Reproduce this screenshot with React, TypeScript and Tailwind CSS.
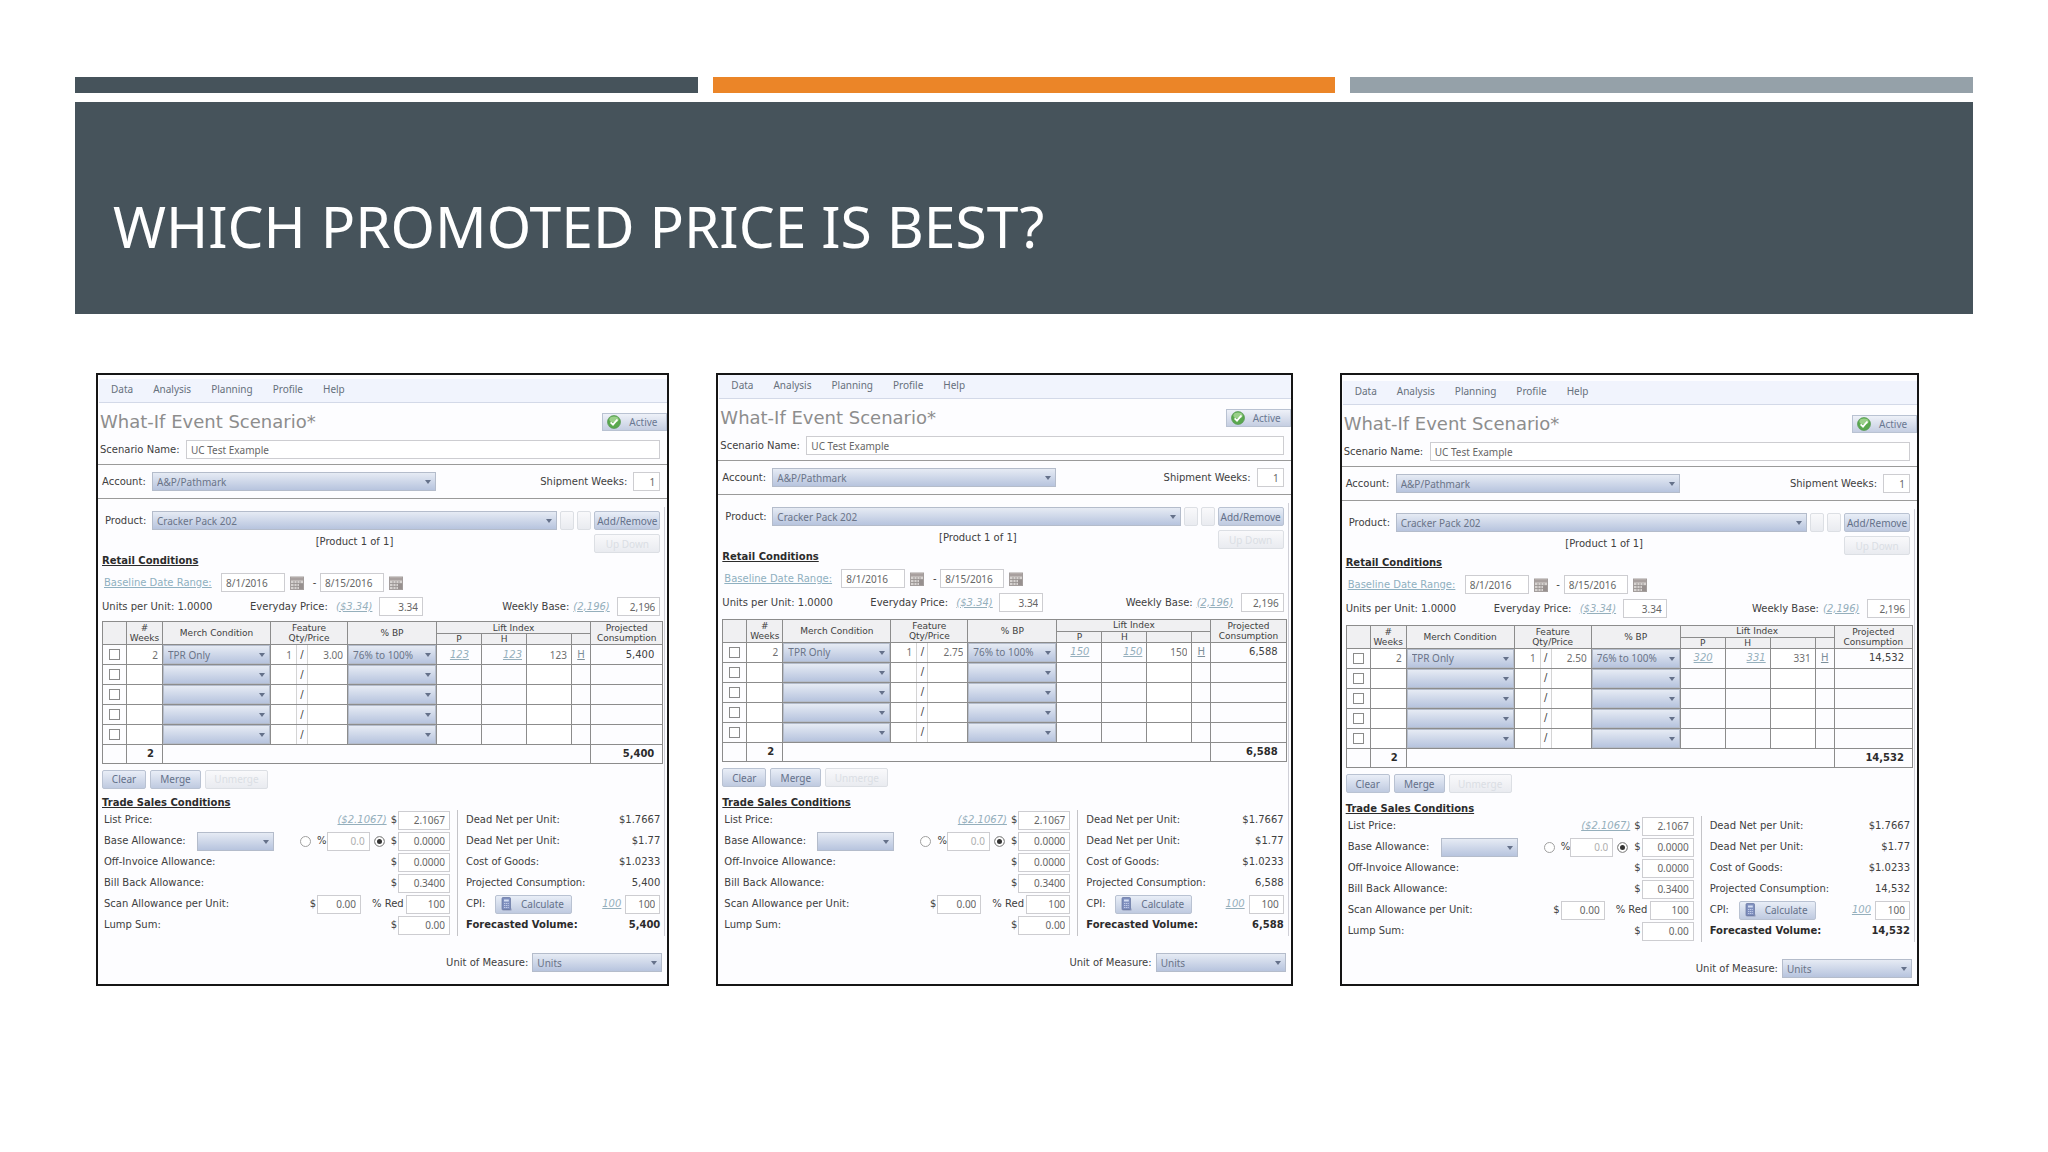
import { useId } from 'react';
import type { ReactNode } from 'react';
import clsx from 'clsx';

type Scenario = {
  price: string;
  liftP: string;
  liftH: string;
  volume: string;
  spacing: string;
};

const scenarios: Scenario[] = [
  { price: '3.00', liftP: '123', liftH: '123', volume: '5,400', spacing: 'pt-1 pb-3' },
  { price: '2.75', liftP: '150', liftH: '150', volume: '6,588', spacing: 'pt-0 pb-3' },
  { price: '2.50', liftP: '320', liftH: '331', volume: '14,532', spacing: 'pt-1.5 pb-1.5' },
];

const menuItems = ['Data', 'Analysis', 'Planning', 'Profile', 'Help'];

export default function App() {
  return (
    <main className="min-h-screen bg-white px-[75px] pt-[77px] font-['DejaVu_Sans',sans-serif]">
      <div className="grid grid-cols-3 gap-[15px]">
        <div className="h-4 bg-[#46535b]"></div>
        <div className="h-4 bg-[#eb8528]"></div>
        <div className="h-4 bg-[#95a1a9]"></div>
      </div>
      <header className="mt-[9px] flex h-[212px] items-end bg-[#46535b] px-[38px] pb-12">
        <h1 className="font-['Noto_Sans',sans-serif] text-[57px] leading-[80px] text-white uppercase">
          Which promoted price is best?
        </h1>
      </header>
      <div className="mt-[59px] mr-[54px] ml-[21px] grid grid-cols-[574fr_577fr_580fr] gap-[47px]">
        {scenarios.map((scenario) => (
          <ScenarioPanel key={scenario.volume} scenario={scenario} />
        ))}
      </div>
    </main>
  );
}

function ScenarioPanel({ scenario }: { scenario: Scenario }) {
  const id = useId();

  return (
    <section
      className={clsx(
        'flex min-h-[613px] flex-col overflow-hidden border-2 border-[#151515] bg-[#fdfdff] text-[10px] leading-4 text-[#404040]',
        scenario.spacing
      )}
    >
      <nav className="ml-px flex h-6 items-center gap-5 border-b border-[#d3d9e8] bg-[#f1f4fd] pb-1 pl-3 font-['Noto_Sans',sans-serif] text-[#66707c]">
        {menuItems.map((item) => (
          <a key={item} href="#">
            {item}
          </a>
        ))}
      </nav>
      <div className="flex h-[37px] items-center justify-between pl-0.5">
        <h2 className="text-[18px] leading-6 text-[#8d8d8d]">What-If Event Scenario*</h2>
        <button className="flex h-[18px] w-[65px] items-center gap-2 border border-[#b9c2d2] bg-linear-to-b from-[#eef1f8] to-[#c5cee2] pl-1 font-['Noto_Sans',sans-serif] text-[#6a7892]">
          <CheckIcon />
          Active
        </button>
      </div>
      <div className="flex items-center border-b border-[#9a9a9a] pr-[7px] pb-[5px] pl-0.5">
        <label htmlFor={id + 'name'} className="w-[86px]">
          Scenario Name:
        </label>
        <Field id={id + 'name'} value="UC Test Example" className="grow pl-1 text-left" />
      </div>
      <div className="flex items-center justify-between border-b border-[#9a9a9a] py-[7px] pr-[7px] pl-1">
        <div className="flex items-center">
          <label htmlFor={id + 'account'} className="w-[50px]">
            Account:
          </label>
          <Select id={id + 'account'} value="A&P/Pathmark" className="w-[284px]" />
        </div>
        <div className="flex items-center gap-1.5">
          <label htmlFor={id + 'weeks'}>Shipment Weeks:</label>
          <Field id={id + 'weeks'} value="1" className="w-[27px]" />
        </div>
      </div>
      <div className="mt-2 mr-0.5 flex grow flex-col justify-between border-r border-[#d0d0d8] pr-1 pl-1">
        <div>
          <ProductRow id={id} />
          <RetailConditions id={id} />
        </div>
        <MerchTable scenario={scenario} />
        <div className="flex gap-1">
          <Button className="w-11">Clear</Button>
          <Button className="w-[51px]">Merge</Button>
          <Button className="w-[63px]" disabled>
            Unmerge
          </Button>
        </div>
        <TradeConditions id={id} scenario={scenario} />
      </div>
      <div className="mt-[17px] flex items-center justify-end gap-1 pr-[5px]">
        <label htmlFor={id + 'unit'}>Unit of Measure:</label>
        <Select id={id + 'unit'} value="Units" className="w-[130px]" />
      </div>
    </section>
  );
}

function ProductRow({ id }: { id: string }) {
  return (
    <div className="pt-1">
      <div className="flex items-center gap-[3px] pl-[3px]">
        <label htmlFor={id + 'product'} className="w-11">
          Product:
        </label>
        <Select id={id + 'product'} value="Cracker Pack 202" className="grow" />
        <Button className="w-[14px]" disabled aria-label="Previous product" />
        <Button className="w-[14px]" disabled aria-label="Next product" />
        <Button className="w-[66px]">Add/Remove</Button>
      </div>
      <div className="flex items-start justify-end pt-1">
        <p className="mr-[201px]">[Product 1 of 1]</p>
        <Button className="w-[66px]" disabled>
          Up Down
        </Button>
      </div>
    </div>
  );
}

function RetailConditions({ id }: { id: string }) {
  return (
    <div>
      <h3 className="font-bold text-[#2b2b2b] underline">Retail Conditions</h3>
      <div className="mt-1 flex items-center pl-0.5">
        <a href="#" className="w-[117px] text-[#8fb0c0] underline">
          Baseline Date Range:
        </a>
        <Field label="Start date" value="8/1/2016" className="w-16 pl-1 text-left" />
        <CalendarIcon />
        <span className="w-[11px] text-center">-</span>
        <Field label="End date" value="8/15/2016" className="w-16 pl-1 text-left" />
        <CalendarIcon />
      </div>
      <div className="mt-[5px] flex items-center">
        <span className="w-[148px]">Units per Unit: 1.0000</span>
        <label htmlFor={id + 'price'} className="w-[86px]">
          Everyday Price:
        </label>
        <Hint className="w-[43px]">($3.34)</Hint>
        <Field id={id + 'price'} value="3.34" className="w-11" />
        <label htmlFor={id + 'base'} className="mr-1 ml-auto">
          Weekly Base:
        </label>
        <Hint className="w-11">(2,196)</Hint>
        <Field id={id + 'base'} value="2,196" className="w-[43px]" />
      </div>
    </div>
  );
}

function MerchTable({ scenario }: { scenario: Scenario }) {
  const th = 'border border-[#8c8c8c] p-0 font-normal';
  const td = 'border border-[#8c8c8c] p-0';

  return (
    <div className="-mr-[3px]">
      <table className="w-full table-fixed border-collapse">
        <colgroup>
          <col className="w-6" />
          <col className="w-9" />
          <col className="w-[108px]" />
          <col className="w-[26px]" />
          <col className="w-[11px]" />
          <col className="w-10" />
          <col className="w-[89px]" />
          <col className="w-[45px]" />
          <col className="w-[45px]" />
          <col className="w-[45px]" />
          <col className="w-[19px]" />
          <col />
        </colgroup>
        <thead className="bg-[#f0f0f2] text-[9px] leading-[10px]">
          <tr className="h-3">
            <th rowSpan={2} className={th} aria-label="Selected"></th>
            <th rowSpan={2} className={th}>
              #<br />
              Weeks
            </th>
            <th rowSpan={2} className={th}>
              Merch Condition
            </th>
            <th rowSpan={2} colSpan={3} className={th}>
              Feature
              <br />
              Qty/Price
            </th>
            <th rowSpan={2} className={th}>
              % BP
            </th>
            <th colSpan={4} className={th}>
              Lift Index
            </th>
            <th rowSpan={2} className={th}>
              Projected
              <br />
              Consumption
            </th>
          </tr>
          <tr className="h-[11px]">
            <th className={th}>P</th>
            <th className={th}>H</th>
            <th className={th} aria-label="Lift"></th>
            <th className={th} aria-label="Source"></th>
          </tr>
        </thead>
        <tbody>
          {[0, 1, 2, 3, 4].map((row) => {
            const filled = row === 0;
            return (
              <tr key={row} className="h-5">
                <td className={td}>
                  <input
                    type="checkbox"
                    aria-label={'Select row ' + (row + 1)}
                    className="mx-auto block size-[11px] appearance-none border border-[#8a8a8a] bg-white"
                  />
                </td>
                <td className={td}>
                  <CellInput label="Weeks" value={filled ? '2' : ''} />
                </td>
                <td className={td}>
                  <Select label="Merch condition" value={filled ? 'TPR Only' : ''} className="w-full" />
                </td>
                <td className={clsx(td, 'border-r-[#d4d4d4]')}>
                  <CellInput label="Quantity" value={filled ? '1' : ''} />
                </td>
                <td className="border-y border-[#8c8c8c] p-0 text-center">/</td>
                <td className={clsx(td, 'border-l-[#d4d4d4]')}>
                  <CellInput label="Price" value={filled ? scenario.price : ''} />
                </td>
                <td className={td}>
                  <Select label="Percent BP" value={filled ? '76% to 100%' : ''} className="w-full" />
                </td>
                <td className={clsx(td, 'pr-3 text-right')}>{filled && <Hint>{scenario.liftP}</Hint>}</td>
                <td className={clsx(td, 'pr-1 text-right')}>{filled && <Hint>{scenario.liftH}</Hint>}</td>
                <td className={td}>
                  <CellInput label="Lift" value={filled ? scenario.liftH : ''} />
                </td>
                <td className={clsx(td, 'text-center')}>
                  {filled && (
                    <a href="#" className="text-[#7d8f9a] underline">
                      H
                    </a>
                  )}
                </td>
                <td className={clsx(td, 'pr-2 text-right')}>{filled && scenario.volume}</td>
              </tr>
            );
          })}
        </tbody>
        <tfoot className="font-bold text-[#2b2b2b]">
          <tr className="h-[19px]">
            <td className={td}></td>
            <td className={clsx(td, 'pr-2 text-right')}>2</td>
            <td className={td} colSpan={9}></td>
            <td className={clsx(td, 'pr-2 text-right')}>{scenario.volume}</td>
          </tr>
        </tfoot>
      </table>
    </div>
  );
}

function TradeConditions({ id, scenario }: { id: string; scenario: Scenario }) {
  const row = 'flex h-[21px] items-center';

  return (
    <div className="pt-0.5">
      <h3 className="leading-[14px] font-bold text-[#2b2b2b] underline">Trade Sales Conditions</h3>
      <div className="flex">
        <div className="w-[356px] border-r border-[#c4c4c8] pr-[7px] pl-0.5">
          <div className={row}>
            <label htmlFor={id + 'list'}>List Price:</label>
            <Hint className="mr-1 ml-auto">($2.1067)</Hint>
            <Dollar />
            <Field id={id + 'list'} value="2.1067" className="w-[52px]" />
          </div>
          <div className={row}>
            <label htmlFor={id + 'allowance'} className="w-[93px]">
              Base Allowance:
            </label>
            <Select id={id + 'allowance'} value="" className="w-[77px]" />
            <label className="ml-auto flex items-center gap-1.5">
              <Radio name={id + 'kind'} />%
            </label>
            <Field label="Allowance percent" value="0.0" className="w-[43px] text-[#b0b0b0]" />
            <label className="ml-1 flex items-center gap-1.5">
              <Radio name={id + 'kind'} checked />
              <Dollar />
            </label>
            <Field label="Base allowance" value="0.0000" className="w-[52px]" />
          </div>
          <div className={row}>
            <label htmlFor={id + 'invoice'} className="mr-auto">
              Off-Invoice Allowance:
            </label>
            <Dollar />
            <Field id={id + 'invoice'} value="0.0000" className="w-[52px]" />
          </div>
          <div className={row}>
            <label htmlFor={id + 'bill'} className="mr-auto">
              Bill Back Allowance:
            </label>
            <Dollar />
            <Field id={id + 'bill'} value="0.3400" className="w-[52px]" />
          </div>
          <div className={row}>
            <label htmlFor={id + 'scan'} className="mr-auto">
              Scan Allowance per Unit:
            </label>
            <Dollar />
            <Field id={id + 'scan'} value="0.00" className="w-11" />
            <label htmlFor={id + 'red'} className="ml-[11px] w-[34px] whitespace-nowrap">
              % Red
            </label>
            <Field id={id + 'red'} value="100" className="w-11" />
          </div>
          <div className={row}>
            <label htmlFor={id + 'lump'} className="mr-auto">
              Lump Sum:
            </label>
            <Dollar />
            <Field id={id + 'lump'} value="0.00" className="w-[52px]" />
          </div>
        </div>
        <div className="grow pl-2">
          <Result label="Dead Net per Unit:" value="$1.7667" />
          <Result label="Dead Net per Unit:" value="$1.77" />
          <Result label="Cost of Goods:" value="$1.0233" />
          <Result label="Projected Consumption:" value={scenario.volume} />
          <div className={row}>
            <label htmlFor={id + 'cpi'} className="w-[29px]">
              CPI:
            </label>
            <Button className="flex w-[77px] items-center gap-[9px] pl-1">
              <CalculatorIcon />
              Calculate
            </Button>
            <Hint className="mr-1 ml-auto">100</Hint>
            <Field id={id + 'cpi'} value="100" className="w-[35px]" />
          </div>
          <Result label="Forecasted Volume:" value={scenario.volume} strong />
        </div>
      </div>
    </div>
  );
}

function Result({ label, value, strong }: { label: string; value: string; strong?: boolean }) {
  return (
    <div className={clsx('flex h-[21px] items-center justify-between', strong && 'font-bold text-[#2b2b2b]')}>
      <span>{label}</span>
      <span>{value}</span>
    </div>
  );
}

type FieldProps = { id?: string; label?: string; value: string; className?: string };

function Field({ id, label, value, className }: FieldProps) {
  return (
    <input
      type="text"
      id={id}
      aria-label={label}
      defaultValue={value}
      className={clsx(
        "h-[19px] min-w-0 border border-[#cdcdd1] bg-white px-1 font-['Noto_Sans',sans-serif] text-[#666666]",
        !className?.includes('text-left') && 'text-right',
        className
      )}
    />
  );
}

function CellInput({ label, value }: { label: string; value: string }) {
  return (
    <input
      type="text"
      aria-label={label}
      defaultValue={value}
      className="block h-[19px] w-full bg-white pr-1 text-right font-['Noto_Sans',sans-serif] text-[#6f6f6f]"
    />
  );
}

function Select({ id, label, value, className }: FieldProps) {
  return (
    <div className={clsx('relative h-[19px]', className)}>
      <select
        id={id}
        aria-label={label}
        defaultValue={value}
        className="block h-full w-full appearance-none border border-[#b4bccb] bg-linear-to-b from-[#e6ebf4] to-[#b7c4de] px-1 font-['Noto_Sans',sans-serif] leading-4 text-[#6a7488]"
      >
        <option>{value}</option>
      </select>
      <svg viewBox="0 0 6 4" className="pointer-events-none absolute top-2 right-[5px] h-1 w-1.5 fill-[#65718a]">
        <path d="M0 0h6L3 4z" />
      </svg>
    </div>
  );
}

type ButtonProps = { className?: string; disabled?: boolean; children?: ReactNode; 'aria-label'?: string };

function Button({ className, children, ...props }: ButtonProps) {
  return (
    <button
      {...props}
      className={clsx(
        "h-[19px] shrink-0 rounded-xs border border-[#b9c2d2] bg-linear-to-b from-[#e9eef7] to-[#bfcae0] font-['Noto_Sans',sans-serif] text-[#64718a] disabled:border-[#dcdfe4] disabled:from-[#f9f9fb] disabled:to-[#e9ebf0] disabled:text-[#dadee4]",
        className
      )}
    >
      {children}
    </button>
  );
}

function Hint({ children, className }: { children: ReactNode; className?: string }) {
  return (
    <a href="#" className={clsx('text-[#95afbc] italic underline', className)}>
      {children}
    </a>
  );
}

function Dollar() {
  return <span className="mr-px">$</span>;
}

function Radio({ name, checked }: { name: string; checked?: boolean }) {
  return (
    <input
      type="radio"
      name={name}
      defaultChecked={checked}
      className="size-[11px] appearance-none rounded-full border border-[#a0a0a0] bg-white checked:bg-[#333333] checked:shadow-[inset_0_0_0_2px_white]"
    />
  );
}

function CheckIcon() {
  return (
    <svg viewBox="0 0 14 14" className="size-[14px]">
      <circle cx="7" cy="7" r="6.5" fill="#5aa84f" stroke="#4a8f45" strokeWidth="0.6" />
      <ellipse cx="7" cy="4.4" rx="4.6" ry="3" fill="#9ad08a" />
      <path d="M3.6 7.4l2.4 2.3 4.4-5.2" fill="none" stroke="#fff" strokeWidth="1.8" />
    </svg>
  );
}

function CalendarIcon() {
  return (
    <svg viewBox="0 0 14 14" className="mx-[5px] size-[14px]">
      <rect x="0.5" y="1" width="13" height="12.5" fill="#d6d2d0" stroke="#a39d9c" />
      <path d="M1 1.5h12v3H1z" fill="#a8a09f" />
      <path d="M1 7.5h12M1 10.5h12M4 5v8M7 5v8M10 5v8" stroke="#9b9594" strokeWidth="0.9" />
      <path d="M9 8h4v5H9z" fill="#97908f" />
    </svg>
  );
}

function CalculatorIcon() {
  return (
    <svg viewBox="0 0 12 14" className="h-[14px] w-3">
      <path d="M1 12.5l2 1h8.5v-2z" fill="#8f98b8" />
      <rect x="2" y="0.5" width="8.5" height="12" rx="1" fill="#7f8fbe" stroke="#66749f" strokeWidth="0.7" />
      <path d="M4 2.5h4.8v2H4z" fill="#d3dcf2" />
      <path d="M4 6.5h4.8M4 8.5h4.8M4 10.5h4.8" stroke="#c2cce8" strokeDasharray="1.2 0.6" />
    </svg>
  );
}
